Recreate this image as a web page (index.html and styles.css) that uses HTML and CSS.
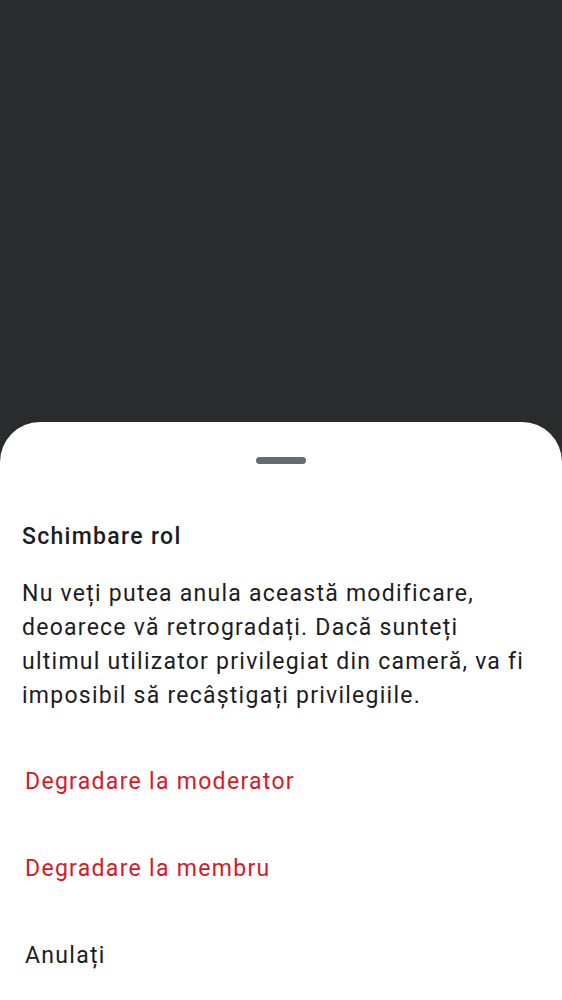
FILE: index.html
```html
<!DOCTYPE html>
<html lang="ro">
<head>
<meta charset="utf-8">
<title>Schimbare rol</title>
<link rel="stylesheet" href="styles.css">
</head>
<body>
<div class="screen">
  <div class="scrim"></div>
  <div class="sheet">
    <div class="handle"></div>
    <h1 class="title">Schimbare rol</h1>
    <p class="message">Nu veți putea anula această modificare, deoarece vă retrogradați. Dacă sunteți ultimul utilizator privilegiat din cameră, va fi imposibil să recâștigați privilegiile.</p>
    <div class="actions">
      <button class="action danger">Degradare la moderator</button>
      <button class="action danger">Degradare la membru</button>
      <button class="action">Anulați</button>
    </div>
  </div>
</div>
</body>
</html>
```

FILE: styles.css
```css
html, body {
  margin: 0;
  padding: 0;
}
body {
  background: #2a2b2d;
  font-family: Roboto, "Noto Sans", sans-serif;
}
.screen {
  min-height: 1000px;
  display: flex;
  flex-direction: column;
}
.scrim {
  flex: 1;
}
.sheet {
  background: #ffffff;
  border-radius: 40px 40px 0 0;
  padding: 35px 0 0;
  height: 543px;
  display: flex;
  flex-direction: column;
}
.handle {
  align-self: center;
  width: 50px;
  height: 7px;
  border-radius: 4px;
  background: #646b74;
}
.title {
  margin: 58px 22px 0;
  font-size: 23px;
  line-height: 30px;
  font-weight: 500;
  letter-spacing: 1.3px;
  color: #1b1d22;
}
.message {
  margin: 25px 30px 0 22px;
  font-size: 23px;
  line-height: 34px;
  font-weight: 400;
  letter-spacing: 1.25px;
  color: #1b1d22;
}
.actions {
  display: flex;
  flex-direction: column;
  margin-top: 26px;
}
.action {
  display: block;
  text-align: left;
  background: none;
  border: 0;
  padding: 26px 25px 27px;
  font-family: inherit;
  font-size: 23px;
  line-height: 34px;
  letter-spacing: 1.3px;
  color: #1b1d22;
}
.action.danger {
  color: #d51928;
}
```
